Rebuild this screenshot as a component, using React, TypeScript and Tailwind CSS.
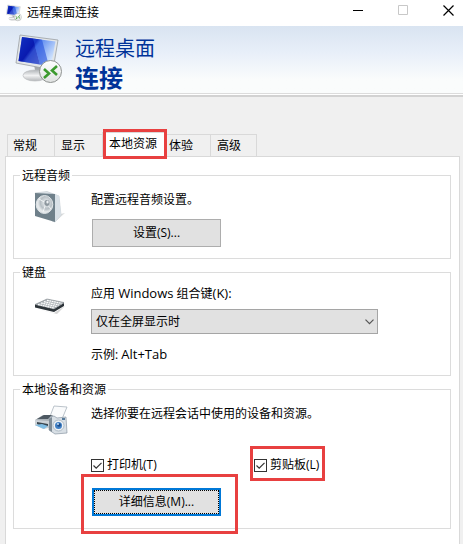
import { useState } from "react";
import type { ReactNode } from "react";

function ComputerLogo({ className }: { className: string }) {
  return (
    <svg viewBox="0 0 48 50" className={className} aria-hidden="true">
      <defs>
        <linearGradient id="screen" x1="0" y1="0" x2="1" y2="0.6">
          <stop offset="0" stopColor="#1c50d8" />
          <stop offset="0.42" stopColor="#0716a8" />
          <stop offset="0.5" stopColor="#5f8cf0" />
          <stop offset="1" stopColor="#d4e6fd" />
        </linearGradient>
        <linearGradient id="stand" x1="0" y1="0" x2="0" y2="1">
          <stop offset="0" stopColor="#b2b6b9" />
          <stop offset="0.5" stopColor="#f1f2f3" />
          <stop offset="1" stopColor="#b4b7b9" />
        </linearGradient>
        <linearGradient id="badge" x1="0" y1="0" x2="0" y2="1">
          <stop offset="0" stopColor="#ffffff" />
          <stop offset="1" stopColor="#dfe2e1" />
        </linearGradient>
      </defs>
      <path d="M19 31l10 1 1 9h-9z" fill="#a5a9ac" />
      <ellipse cx="20" cy="41.500" rx="12" ry="5.500" fill="url(#stand)" stroke="#bcbfc1" strokeWidth="0.700" />
      <path d="M5 1l38 5-5 30L1 29z" fill="#e3e6e8" stroke="#9b9fa3" strokeWidth="0.800" />
      <path d="M7 3l33.500 4.500-4.500 25L3.500 27z" fill="url(#screen)" />
      <path d="M7 3l11 1.500L25 30.500 3.500 27z" fill="#0a1db4" opacity="0.600" />
      <path d="M18 4.500l9 1.200L34 32l-9-1.500z" fill="#2450dc" opacity="0.600" />
      <circle cx="35.500" cy="37.500" r="11" fill="url(#badge)" stroke="#8f9391" strokeWidth="1" />
      <path d="M29 35l5 4.500-5 4.500M42 32l-5 4.500 5 4.500" fill="none" stroke="#3c9a2e" strokeWidth="2.600" />
    </svg>
  );
}

function SpeakerIcon() {
  return (
    <svg viewBox="0 0 32 32" className="block h-8 w-8" aria-hidden="true">
      <defs>
        <radialGradient id="cone" cx="0.6" cy="0.4">
          <stop offset="0" stopColor="#8f989f" />
          <stop offset="0.3" stopColor="#dadfe2" />
          <stop offset="0.7" stopColor="#b6bec3" />
          <stop offset="1" stopColor="#e4e8ea" />
        </radialGradient>
      </defs>
      <path d="M22 30l9-8-5 1z" fill="#dcdedf" />
      <path d="M1 2l12-1.500L25 5l2 19-6 7-3-1z" fill="#dfe5ea" stroke="#b7bfc5" strokeWidth="0.500" />
      <path d="M1 2l20 1v28L1 25z" fill="#6f808a" />
      <path d="M21 3l4 2 2 19-6 7z" fill="#d9e1e7" />
      <ellipse cx="10.500" cy="13.500" rx="8.300" ry="9" fill="url(#cone)" stroke="#dfe4e7" strokeWidth="1" />
      <path d="M12 12L5 8M12 12l-3 9M12 12l5 6" stroke="#f4f6f7" strokeWidth="0.900" />
      <ellipse cx="13" cy="12" rx="2.500" ry="3" fill="#8d979e" />
      <ellipse cx="13.500" cy="11" rx="1.200" ry="1.500" fill="#eef1f3" />
    </svg>
  );
}

function KeyboardIcon() {
  return (
    <svg viewBox="0 0 32 16" className="block h-4 w-8" aria-hidden="true">
      <path d="M3 11l17 4 11-7-8 8z" fill="#d5d5d5" />
      <path d="M1 6.500L20 11l10-6v3l-10 6L1 9.500z" fill="#2c3338" />
      <path d="M1 6.500L13 1l17 3.500L20 11z" fill="#b0b6ba" stroke="#6b7278" strokeWidth="0.500" />
      <path d="M4 6.500l16 3.500M7 5l15.500 3.500M10 3.700l15 3.300M13 2.300l14.500 3" stroke="#ffffff" strokeWidth="1.200" strokeDasharray="1.800 0.600" />
    </svg>
  );
}

function DevicesIcon() {
  return (
    <svg viewBox="0 0 34 30" className="block h-[30px] w-[34px]" aria-hidden="true">
      <path d="M20 1l13 1-5 12H15z" fill="#fafbfc" stroke="#aab4bd" strokeWidth="0.800" />
      <path d="M1 15l8-5h10l-2 13H9l-8-3z" fill="#aab2b8" />
      <path d="M3 14l7-4h8l-4 4z" fill="#4e5962" />
      <path d="M1 15l14 1v7l-6 1-8-4z" fill="#ccd2d7" />
      <path d="M3 17l11 2v2l-5 1-6-3z" fill="#3b4750" />
      <path d="M1 20l7-1 6 2-4 3z" fill="#7fbde4" />
      <path d="M16 12l4-1 3 2 9-1 1 16-12 1-6-4z" fill="#d8dfe5" stroke="#8997a3" strokeWidth="0.700" />
      <path d="M15 14l3-2v15l-3-2z" fill="#7f8c97" />
      <path d="M28 13h3v2h-3z" fill="#577b9b" />
      <circle cx="24.500" cy="20.500" r="5.500" fill="#edf1f5" stroke="#9fadb9" strokeWidth="0.800" />
      <circle cx="24.500" cy="20.500" r="3.500" fill="#3f7fc4" />
      <circle cx="25" cy="20" r="1.800" fill="#1c4a86" />
      <circle cx="24" cy="19" r="0.900" fill="#d6ebff" />
    </svg>
  );
}

/* Red frame that points out a control; its place is set by the caller. */
function Callout({ className }: { className: string }) {
  return <span aria-hidden="true" className={`pointer-events-none absolute z-10 border-3 border-[#e84040] ${className}`} />;
}

function Group({ title, icon, className, children }: { title: string; icon: ReactNode; className: string; children: ReactNode }) {
  return (
    <fieldset className="min-w-0 border border-[#dcdcdc] px-1.5">
      <legend className="px-0.5 pt-0.5 leading-4">{title}</legend>
      <div className={`flex ${className}`}>
        <div className="w-[71px] shrink-0 pl-3.5">{icon}</div>
        <div className="min-w-0 flex-1">{children}</div>
      </div>
    </fieldset>
  );
}

function CheckBox({ label }: { label: string }) {
  const [on, setOn] = useState(true);
  return (
    <label className="relative flex w-fit items-center gap-[3px] leading-4">
      <input
        type="checkbox"
        checked={on}
        onChange={() => setOn(!on)}
        className="h-[13px] w-[13px] appearance-none border border-[#333333] bg-white"
      />
      {on && (
        <svg viewBox="0 0 13 13" className="pointer-events-none absolute left-0 h-[13px] w-[13px]" aria-hidden="true">
          <path d="M2.500 6.500l2.700 2.700 5.300-5.400" fill="none" stroke="#333333" strokeWidth="1.200" />
        </svg>
      )}
      {label}
    </label>
  );
}

const tabBase = "border-t border-l border-[#d9d9d9] text-left leading-4";

export default function App() {
  return (
    <div className="flex min-h-screen flex-col bg-[#f0f0f0] font-['Open_Sans','Noto_Sans_CJK_SC',sans-serif] text-xs text-black">
      <header>
        <div className="flex h-[26px] items-center bg-white pr-[9px] pl-1.5">
          <ComputerLogo className="h-[18px] w-4" />
          <h1 className="ml-[5px] flex-1 leading-4">远程桌面连接</h1>
          <div className="flex gap-[34px] pb-1.5">
            <button aria-label="最小化" className="block">
              <svg viewBox="0 0 11 11" className="h-[11px] w-[11px]"><path d="M0 5.500h10" stroke="#000" /></svg>
            </button>
            <button aria-label="最大化" disabled className="block">
              <svg viewBox="0 0 11 11" className="h-[11px] w-[11px]"><path d="M.5.5h9v9h-9z" fill="none" stroke="#c8c8c8" /></svg>
            </button>
            <button aria-label="关闭" className="block">
              <svg viewBox="0 0 11 11" className="h-[11px] w-[11px]"><path d="M.5.5l10 10M10.500.5l-10 10" stroke="#000" strokeWidth="1.200" /></svg>
            </button>
          </div>
        </div>
        <div className="flex h-[67px] gap-3 bg-linear-to-b from-[#d9e4f1] via-[#e8eff9] via-40% to-[#fafcfc] to-80% pt-2 pl-[15px] text-[#003399]">
          <ComputerLogo className="h-[50px] w-12" />
          <div>
            <p className="text-xl leading-[30px]">远程桌面</p>
            <p className="text-2xl leading-[28px] font-bold">连接</p>
          </div>
        </div>
        <div className="h-1 border-t border-b-2 border-t-[#dcdcdc] border-b-[#d2d2d2] bg-white" />
      </header>

      <main className="flex flex-1 flex-col pt-[35px] pr-[3px] pl-[5px]">
        <div role="tablist" className="flex items-end pl-0.5">
          <button role="tab" className={`${tabBase} h-[22px] w-[47px] pl-[5px]`}>常规</button>
          <button role="tab" className={`${tabBase} h-[22px] w-12 pl-1.5`}>显示</button>
          <button role="tab" aria-selected="true" className={`${tabBase} relative -mb-px h-[25px] w-[62px] bg-white pb-0.5 pl-1.5`}>
            本地资源
            <Callout className="-top-1 -right-[3px] -bottom-0.5 left-0" />
          </button>
          <button role="tab" className={`${tabBase} h-[22px] w-[46px] pl-1`}>体验</button>
          <button role="tab" className={`${tabBase} h-[22px] w-[47px] border-r pl-1.5`}>高级</button>
        </div>

        <div role="tabpanel" className="flex flex-1 flex-col gap-1 border-x border-t border-[#d9d9d9] bg-white pt-[9px] pr-2 pb-3.5 pl-[7px]">
          <Group title="远程音频" icon={<SpeakerIcon />} className="pt-[7px] pb-[11px]">
            <p className="leading-[18px]">配置远程音频设置。</p>
            <button className="mt-2.5 ml-px h-7 w-[129px] border border-[#adadad] bg-[#e1e1e1]">设置(S)...</button>
          </Group>

          <Group title="键盘" icon={<div className="pt-3.5"><KeyboardIcon /></div>} className="pt-[3px] pb-3">
            <label htmlFor="keys" className="block h-[18px] leading-[18px]">
              应用 <span className="text-[13px]">Windows</span> 组合键<span className="text-[13px]">(K):</span>
            </label>
            <div className="relative mt-[7px] w-[287px] max-w-full">
              <select id="keys" className="block h-[25px] w-full appearance-none border border-[#a5a5a5] bg-[#e1e1e1] px-1">
                <option>仅在全屏显示时</option>
                <option>在这台计算机上</option>
                <option>在远程计算机上</option>
              </select>
              <svg viewBox="0 0 9 6" className="pointer-events-none absolute top-2.5 right-1 h-1.5 w-[9px]" aria-hidden="true">
                <path d="M.5.7l4 4 4-4" fill="none" stroke="#555" strokeWidth="1.200" />
              </svg>
            </div>
            <p className="mt-[11px] h-[18px] leading-[18px]">
              示例: <span className="text-[13px]">Alt+Tab</span>
            </p>
          </Group>

          <Group title="本地设备和资源" icon={<DevicesIcon />} className="pt-[7px] pb-3">
            <p className="leading-[18px]">选择你要在远程会话中使用的设备和资源。</p>
            <div className="mt-[34px] grid grid-cols-[163px_1fr]">
              <CheckBox label="打印机(T)" />
              <div className="relative w-fit">
                <CheckBox label="剪贴板(L)" />
                <Callout className="-top-[11px] -right-1.5 -bottom-2 -left-1" />
              </div>
            </div>
            <div className="relative mt-[15px] ml-px w-[129px]">
              <button className="block h-7 w-full border-2 border-[#0078d7] bg-[#e1e1e1]">
                <span className="flex h-6 items-center justify-center border border-dotted border-black">详细信息(M)...</span>
              </button>
              <Callout className="-top-3.5 -right-[17px] -bottom-[18px] -left-[11px]" />
            </div>
          </Group>
        </div>
      </main>
    </div>
  );
}
